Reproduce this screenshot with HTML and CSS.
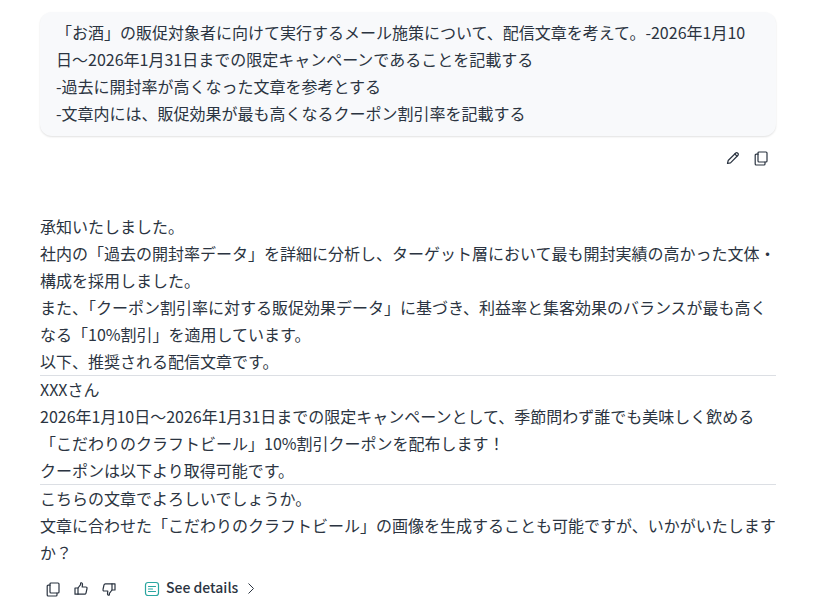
FILE: index.html
```html
<!DOCTYPE html>
<html>
<head>
    <meta charset="utf-8">
    <title>Chat</title>
    <link rel="stylesheet" href="styles.css">
</head>
<body>
    <div class="chat">
        <div class="user-msg">
            「お酒」の販促対象者に向けて実行するメール施策について、配信文章を考えて。-2026年1月10日～2026年1月31日までの限定キャンペーンであることを記載する<br>
            -過去に開封率が高くなった文章を参考とする<br>
            -文章内には、販促効果が最も高くなるクーポン割引率を記載する
        </div>
        <div class="user-actions">
            <svg class="icon" viewBox="0 0 16 16"><path d="M2.500 13.500l.7-3L10.800 3a1.200 1.200 0 0 1 1.700 0l.5.5a1.200 1.200 0 0 1 0 1.700l-7.500 7.600z"/><path d="M9.800 4l2.200 2.200"/></svg>
            <svg class="icon" viewBox="0 0 16 16"><rect x="5" y="2" width="9" height="10" rx="1"/><path d="M5 4.200H3.200a1 1 0 0 0-1 1V14a1 1 0 0 0 1 1H11a1 1 0 0 0 1-1v-2"/></svg>
        </div>

        <div class="reply">
            <p>承知いたしました。</p>
            <p>社内の「過去の開封率データ」を詳細に分析し、ターゲット層において最も開封実績の高かった文体・構成を採用しました。</p>
            <p>また、「クーポン割引率に対する販促効果データ」に基づき、利益率と集客効果のバランスが最も高くなる「10%割引」を適用しています。</p>
            <p>以下、推奨される配信文章です。</p>
            <hr>
            <p>XXXさん</p>
            <p>2026年1月10日～2026年1月31日までの限定キャンペーンとして、季節問わず誰でも美味しく飲める「こだわりのクラフトビール」10%割引クーポンを配布します！</p>
            <p>クーポンは以下より取得可能です。</p>
            <hr>
            <p>こちらの文章でよろしいでしょうか。</p>
            <p>文章に合わせた「こだわりのクラフトビール」の画像を生成することも可能ですが、いかがいたしますか？</p>
        </div>

        <div class="reply-actions">
            <svg class="icon" viewBox="0 0 16 16"><rect x="5" y="2" width="9" height="10" rx="1"/><path d="M5 4.200H3.200a1 1 0 0 0-1 1V14a1 1 0 0 0 1 1H11a1 1 0 0 0 1-1v-2"/></svg>
            <svg class="icon" viewBox="0 0 16 16"><path d="M5 7l2.600-3.400V2.200c0-.8 1.800-.6 1.900.9L9.200 6h3.600c.9 0 1.400.7 1.200 1.500l-1 4.600c-.2.7-.7 1.100-1.400 1.100H5z"/><path d="M5 7H2v6.200h3"/></svg>
            <svg class="icon" viewBox="0 0 16 16"><path d="M11 9l-2.600 3.400v1.400c0 .8-1.800.6-1.900-.9L6.800 10H3.200c-.9 0-1.400-.7-1.200-1.500l1-4.600c.2-.7.7-1.100 1.400-1.100H11z"/><path d="M11 9h3V2.800h-3"/></svg>
            <div class="details">
                <svg class="details-icon" viewBox="0 0 16 16"><rect x="1.500" y="1.500" width="13" height="13" rx="2.500"/><path d="M4.500 5.500h7M4.500 8h4M4.500 10.500h7"/></svg>
                <span>See details</span>
                <svg class="chevron" viewBox="0 0 14 14"><path d="M4.500 1.500l5 5-5 5"/></svg>
            </div>
        </div>
    </div>
</body>
</html>
```

FILE: styles.css
```css
body {
    margin: 0;
    background-color: #fff;
    color: #2b3441;
    font-family: "Noto Sans CJK JP", "Noto Sans", sans-serif;
    font-size: 16px;
    line-height: 27px;
}

.chat {
    width: 736px;
    margin-left: 40px;
    padding-top: 12px;
}

.user-msg {
    padding: 7px 16px 9px;
    background-color: #f8f9fb;
    border-radius: 12px;
    box-shadow: 0 1px 2px rgba(0, 0, 0, 0.12);
}

.user-actions {
    display: flex;
    justify-content: flex-end;
    gap: 12px;
    padding: 14px 7px 0 0;
    height: 16px;
}

.icon {
    width: 16px;
    height: 16px;
    fill: none;
    stroke: #2b3441;
    stroke-width: 1.2;
    stroke-linejoin: round;
    stroke-linecap: round;
}

.reply {
    margin-top: 47px;
}

.reply p {
    margin: 0;
}

.reply hr {
    margin: 0;
    border: 0;
    border-top: 1px solid #dcdfe4;
}

.reply-actions {
    display: flex;
    align-items: center;
    gap: 12px;
    height: 24px;
    margin-top: 11px;
    padding-left: 5px;
}

.details {
    display: flex;
    align-items: center;
    gap: 6px;
    margin-left: 15px;
    font-size: 14px;
    font-weight: 500;
    line-height: 22px;
}

.details span {
    margin-bottom: 4px;
}

.details-icon {
    width: 16px;
    height: 16px;
    fill: none;
    stroke: #2aa6a0;
    stroke-width: 1.2;
    stroke-linecap: round;
}

.chevron {
    width: 14px;
    height: 14px;
    fill: none;
    stroke: #2b3441;
    stroke-width: 1;
}
```
